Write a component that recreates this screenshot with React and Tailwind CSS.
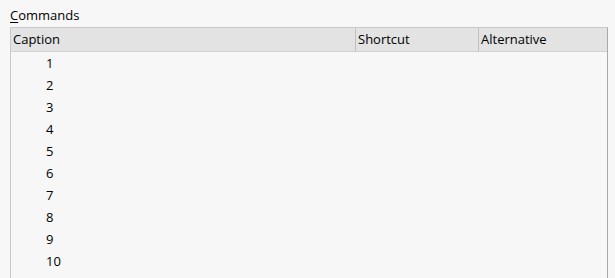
import React from 'react';

const rows = [1, 2, 3, 4, 5, 6, 7, 8, 9, 10];

const App = () => {
  return (
    <div
      className="w-[615px] h-[278px] overflow-hidden bg-[#f7f7f7] text-[13px] text-black pl-[10px] pt-[5px]"
      style={{ fontFamily: '"Segoe UI", "Open Sans", "Noto Sans", sans-serif' }}
    >
      <div className="h-[22px] leading-[20px]">
        <span className="underline underline-offset-2">C</span>ommands
      </div>
      <div className="w-[598px] h-[300px] border border-[#c8c8c8] border-r-[#a9a9a9] bg-[#f7f7f7]">
        <div className="flex h-[24px] bg-[#e3e3e3] border-b border-[#d0d0d0] leading-[23px]">
          <div className="w-[345px] pl-[2px] border-r border-[#c0c0c0]">Caption</div>
          <div className="w-[123px] pl-[2px] border-r border-[#c0c0c0]">Shortcut</div>
          <div className="flex-1 pl-[2px]">Alternative</div>
        </div>
        {rows.map((n) => (
          <div key={n} className="h-[22px] leading-[22px] pl-[35px]">
            {n}
          </div>
        ))}
      </div>
    </div>
  );
};

export default App;
